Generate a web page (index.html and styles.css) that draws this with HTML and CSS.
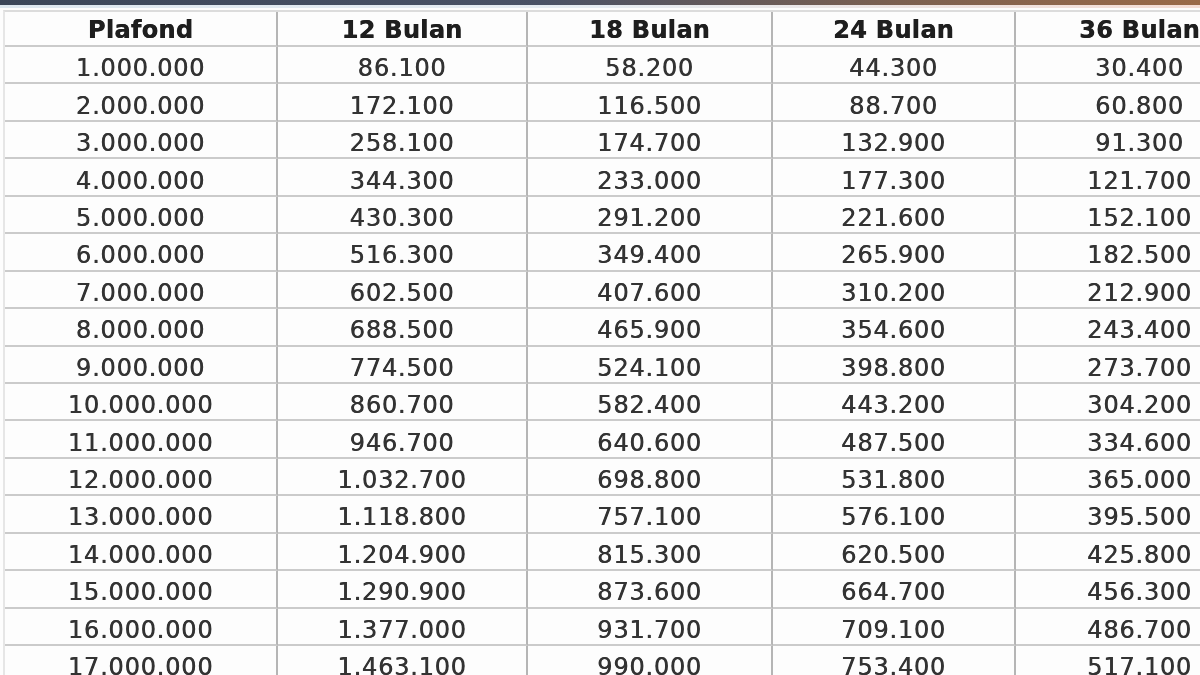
FILE: index.html
```html
<!DOCTYPE html>
<html lang="id">
<head>
<meta charset="utf-8">
<title>Tabel Angsuran KUR</title>
<link rel="stylesheet" href="styles.css">
</head>
<body>
<div class="topbar"></div>
<div class="topglow"></div>
<div class="sheet">
  <div class="cell head">Plafond</div><div class="cell head">12 Bulan</div><div class="cell head">18 Bulan</div><div class="cell head">24 Bulan</div><div class="cell head">36 Bulan</div>
  <div class="cell">1.000.000</div><div class="cell">86.100</div><div class="cell">58.200</div><div class="cell">44.300</div><div class="cell">30.400</div>
  <div class="cell">2.000.000</div><div class="cell">172.100</div><div class="cell">116.500</div><div class="cell">88.700</div><div class="cell">60.800</div>
  <div class="cell">3.000.000</div><div class="cell">258.100</div><div class="cell">174.700</div><div class="cell">132.900</div><div class="cell">91.300</div>
  <div class="cell">4.000.000</div><div class="cell">344.300</div><div class="cell">233.000</div><div class="cell">177.300</div><div class="cell">121.700</div>
  <div class="cell">5.000.000</div><div class="cell">430.300</div><div class="cell">291.200</div><div class="cell">221.600</div><div class="cell">152.100</div>
  <div class="cell">6.000.000</div><div class="cell">516.300</div><div class="cell">349.400</div><div class="cell">265.900</div><div class="cell">182.500</div>
  <div class="cell">7.000.000</div><div class="cell">602.500</div><div class="cell">407.600</div><div class="cell">310.200</div><div class="cell">212.900</div>
  <div class="cell">8.000.000</div><div class="cell">688.500</div><div class="cell">465.900</div><div class="cell">354.600</div><div class="cell">243.400</div>
  <div class="cell">9.000.000</div><div class="cell">774.500</div><div class="cell">524.100</div><div class="cell">398.800</div><div class="cell">273.700</div>
  <div class="cell">10.000.000</div><div class="cell">860.700</div><div class="cell">582.400</div><div class="cell">443.200</div><div class="cell">304.200</div>
  <div class="cell">11.000.000</div><div class="cell">946.700</div><div class="cell">640.600</div><div class="cell">487.500</div><div class="cell">334.600</div>
  <div class="cell">12.000.000</div><div class="cell">1.032.700</div><div class="cell">698.800</div><div class="cell">531.800</div><div class="cell">365.000</div>
  <div class="cell">13.000.000</div><div class="cell">1.118.800</div><div class="cell">757.100</div><div class="cell">576.100</div><div class="cell">395.500</div>
  <div class="cell">14.000.000</div><div class="cell">1.204.900</div><div class="cell">815.300</div><div class="cell">620.500</div><div class="cell">425.800</div>
  <div class="cell">15.000.000</div><div class="cell">1.290.900</div><div class="cell">873.600</div><div class="cell">664.700</div><div class="cell">456.300</div>
  <div class="cell">16.000.000</div><div class="cell">1.377.000</div><div class="cell">931.700</div><div class="cell">709.100</div><div class="cell">486.700</div>
  <div class="cell">17.000.000</div><div class="cell">1.463.100</div><div class="cell">990.000</div><div class="cell">753.400</div><div class="cell">517.100</div>
</div>
</body>
</html>
```
FILE: styles.css
```css
html, body {
  margin: 0;
  padding: 0;
  background: #fdfdfd;
  overflow: hidden;
  width: 1200px;
  height: 675px;
}
.topbar {
  height: 5px;
  background: linear-gradient(90deg, #3b4658 0%, #4a5266 45%, #7c6050 75%, #9a6a48 100%);
}
.topglow {
  height: 3px;
  background: linear-gradient(90deg, #dde7ef 0%, #e6ecf2 50%, #f4dcd4 100%);
}
.sheet {
  margin: 2px 0 0 3px;
  width: 1260px;
  display: grid;
  grid-template-columns: 273px 250px 245px 243px 249px;
  grid-template-rows: 35px repeat(17, 37.44px);
  border-top: 2px solid #dcdcdc;
  border-left: 2px solid #e6e6e6;
  font-family: "DejaVu Sans", Verdana, sans-serif;
  filter: blur(0.7px);
}
.cell {
  box-sizing: border-box;
  display: flex;
  align-items: center;
  justify-content: center;
  border-bottom: 2px solid #cbcbcb;
  border-right: 2px solid #b5b5b5;
  font-size: 24px;
  letter-spacing: 0.8px;
  color: #333;
  text-shadow: 0.5px 0 0 #333;
  padding-top: 7px;
}
.head {
  font-weight: bold;
  letter-spacing: 0.3px;
  color: #1e1e1e;
  text-shadow: 0.5px 0 0 #1e1e1e;
  padding-top: 2px;
}
```
